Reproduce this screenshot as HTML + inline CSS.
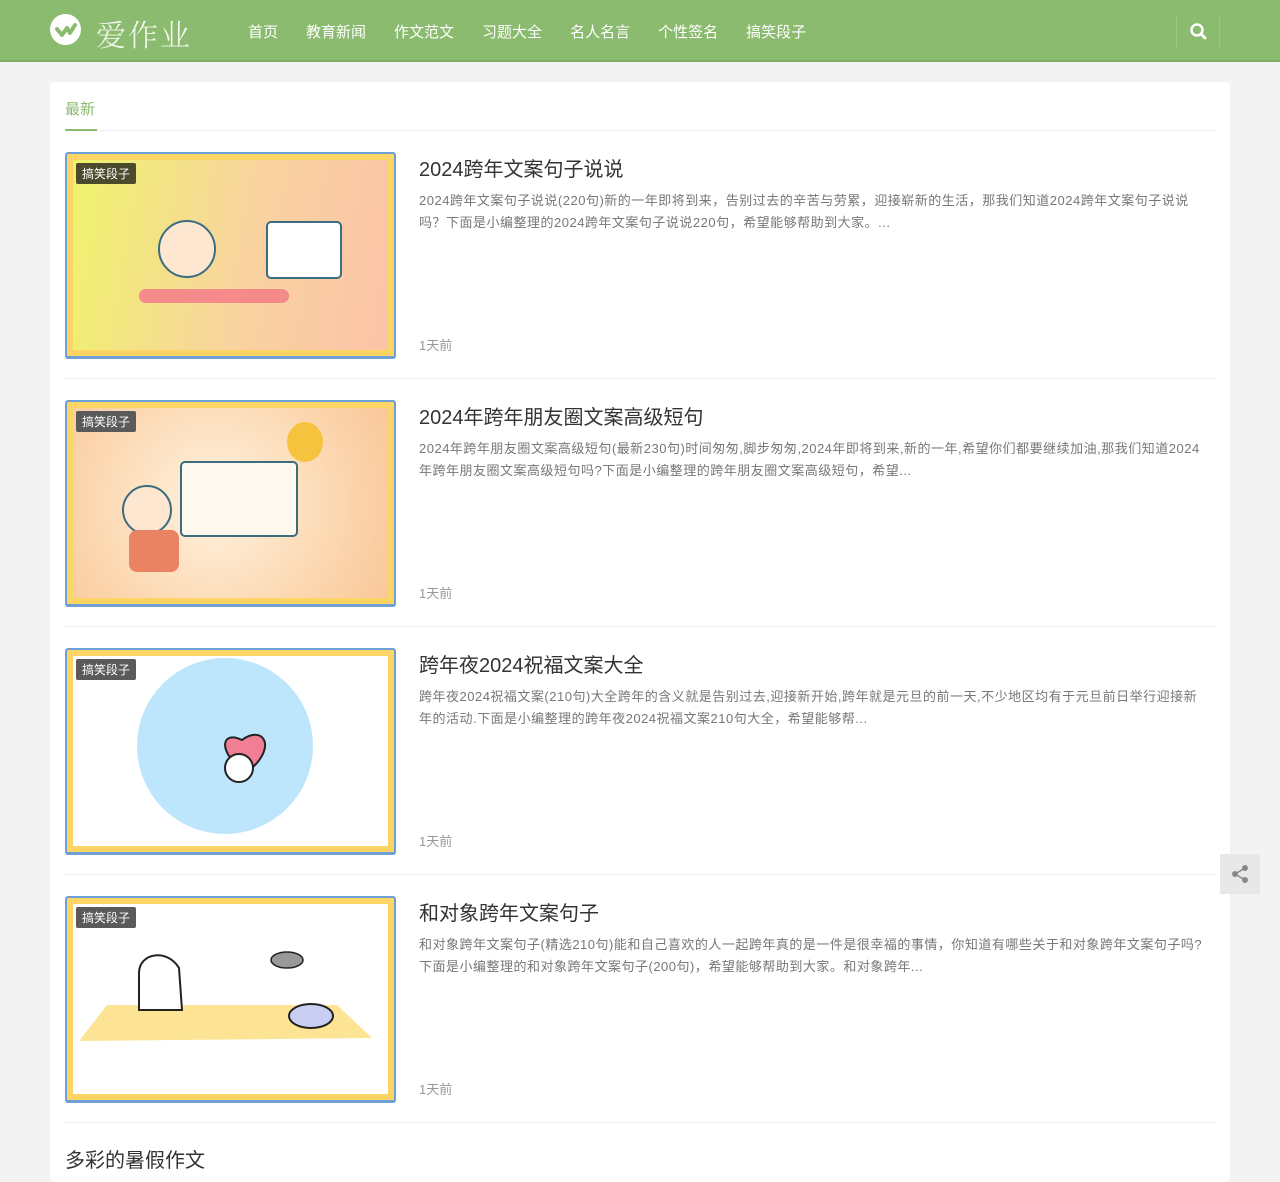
<!DOCTYPE html>
<html><head><meta charset="utf-8"><style>
*{margin:0;padding:0;box-sizing:border-box}
body{width:1280px;height:1167px;overflow:hidden;background:#f3f3f3;font-family:"Liberation Sans","Noto Sans CJK SC",sans-serif;position:relative}
.hd{height:62px;background:#8bbb6f;border-bottom:2px solid #7fae63;position:relative}
.logo{position:absolute;left:50px;top:14px;width:31px;height:31px;border-radius:50%;background:#fff}
.lt{position:absolute;left:96px;top:11px;font-size:30px;color:#f4f8ef;letter-spacing:2px;font-family:"Noto Serif CJK SC",serif;font-weight:300}
.nav{position:absolute;left:248px;top:21px;font-size:15px;color:#fff;white-space:nowrap}
.nav span{margin-right:28px}
.srch{position:absolute;left:1176px;top:16px;width:44px;height:32px;border-left:1px solid #9cc784;border-right:1px solid #9cc784}
.card{position:absolute;left:50px;top:82px;width:1180px;height:1100px;background:#fff;border-radius:4px}
.tab{position:absolute;left:15px;top:16px;font-size:15px;color:#8bbb6f}
.tabl{position:absolute;left:15px;top:48px;width:1150px;border-top:1px solid #eee}
.tabu{position:absolute;left:15px;top:47px;width:32px;height:2px;background:#8bbb6f}
.row{position:absolute;left:15px;width:1151px;height:227px;border-bottom:1px solid #eee}
.th{position:absolute;left:0;top:0;width:331px;height:207px;border:2px solid #6d9fd9;border-bottom-width:3px;border-radius:3px;overflow:hidden}
.in{position:absolute;inset:0;border:6px solid #fcd565}
.tag{position:absolute;left:9px;top:9px;background:#5a5a5a;color:#fff;font-size:12px;padding:2px 6px;border-radius:2px}
.t{position:absolute;left:354px;top:1px;font-size:20px;color:#333}
.d{position:absolute;left:354px;top:38px;width:790px;font-size:13px;line-height:22px;color:#777;letter-spacing:0.5px}
.dt{position:absolute;left:354px;top:183px;font-size:13px;color:#999}
.bt{position:absolute;left:15px;top:1062px;font-size:20px;color:#333}
.share{position:absolute;left:1220px;top:854px;width:40px;height:40px;background:#e8e8e8}
</style></head><body>
<div class="hd">
<div class="logo"><svg width="31" height="31" viewBox="0 0 31 31"><path d="M7 15 L12 21 L17 14 L20 19 L25 11" stroke="#8bbb6f" stroke-width="4" fill="none" stroke-linecap="round" stroke-linejoin="round"/></svg></div>
<div class="lt">爱作业</div>
<div class="nav"><span>首页</span><span>教育新闻</span><span>作文范文</span><span>习题大全</span><span>名人名言</span><span>个性签名</span><span>搞笑段子</span></div>
<div class="srch"><svg width="44" height="32"><circle cx="20" cy="14" r="5.5" stroke="#fff" stroke-width="2.5" fill="none"/><line x1="24" y1="18" x2="28" y2="22" stroke="#fff" stroke-width="3" stroke-linecap="round"/></svg></div>
</div>
<div class="card">
<div class="tab">最新</div><div class="tabl"></div><div class="tabu"></div>
<div class="row" style="top:70px"><div class="th" style="background:linear-gradient(100deg,#eef46a,#f9d3a0 55%,#fcc2a8)"><div class="in"></div>
<svg style="position:absolute;left:0;top:0" width="327" height="202"><circle cx="120" cy="95" r="28" fill="#fde7d0" stroke="#3b6d80" stroke-width="2"/><rect x="72" y="135" width="150" height="14" rx="7" fill="#f58a8a"/><rect x="200" y="68" width="74" height="56" rx="4" fill="#fff" stroke="#3b6d80" stroke-width="2"/></svg>
<div class="tag" style="background:#4c4a2c">搞笑段子</div></div>
<div class="t">2024跨年文案句子说说</div>
<div class="d">2024跨年文案句子说说(220句)新的一年即将到来，告别过去的辛苦与劳累，迎接崭新的生活，那我们知道2024跨年文案句子说说吗？下面是小编整理的2024跨年文案句子说说220句，希望能够帮助到大家。...</div>
<div class="dt">1天前</div></div>
<div class="row" style="top:318px"><div class="th" style="background:radial-gradient(circle at 45% 50%,#fff3e0,#fcd7b0 60%,#f9c697)"><div class="in"></div>
<svg style="position:absolute;left:0;top:0" width="327" height="202"><rect x="114" y="60" width="116" height="74" rx="4" fill="#fff8ee" stroke="#3b6d80" stroke-width="2"/><circle cx="80" cy="108" r="24" fill="#fde7d0" stroke="#3b6d80" stroke-width="2"/><rect x="62" y="128" width="50" height="42" rx="8" fill="#e98363"/><ellipse cx="238" cy="40" rx="18" ry="20" fill="#f6c33f"/></svg>
<div class="tag">搞笑段子</div></div>
<div class="t">2024年跨年朋友圈文案高级短句</div>
<div class="d">2024年跨年朋友圈文案高级短句(最新230句)时间匆匆,脚步匆匆,2024年即将到来,新的一年,希望你们都要继续加油,那我们知道2024年跨年朋友圈文案高级短句吗?下面是小编整理的跨年朋友圈文案高级短句，希望...</div>
<div class="dt">1天前</div></div>
<div class="row" style="top:566px"><div class="th" style="background:#fff"><div class="in"></div>
<svg style="position:absolute;left:0;top:0" width="327" height="202"><circle cx="158" cy="96" r="88" fill="#bde5fb"/><path d="M175 120 C150 100 155 80 175 90 C195 75 210 95 185 118 Z" fill="#f07f95" stroke="#222" stroke-width="2"/><circle cx="172" cy="118" r="14" fill="#fff" stroke="#222" stroke-width="2"/></svg>
<div class="tag">搞笑段子</div></div>
<div class="t">跨年夜2024祝福文案大全</div>
<div class="d">跨年夜2024祝福文案(210句)大全跨年的含义就是告别过去,迎接新开始,跨年就是元旦的前一天,不少地区均有于元旦前日举行迎接新年的活动.下面是小编整理的跨年夜2024祝福文案210句大全，希望能够帮...</div>
<div class="dt">1天前</div></div>
<div class="row" style="top:814px"><div class="th" style="background:#fff"><div class="in"></div>
<svg style="position:absolute;left:0;top:0" width="327" height="202"><polygon points="40,107 270,107 305,140 12,143" fill="#fde494"/><path d="M72 112 L72 75 C72 55 100 50 112 70 L115 112 Z" fill="#fff" stroke="#222" stroke-width="2"/><ellipse cx="244" cy="118" rx="22" ry="12" fill="#c9cff2" stroke="#222" stroke-width="2"/><ellipse cx="220" cy="62" rx="16" ry="8" fill="#999" stroke="#222" stroke-width="1.5"/></svg>
<div class="tag">搞笑段子</div></div>
<div class="t">和对象跨年文案句子</div>
<div class="d">和对象跨年文案句子(精选210句)能和自己喜欢的人一起跨年真的是一件是很幸福的事情，你知道有哪些关于和对象跨年文案句子吗?下面是小编整理的和对象跨年文案句子(200句)，希望能够帮助到大家。和对象跨年...</div>
<div class="dt">1天前</div></div>
<div class="bt">多彩的暑假作文</div>
</div>
<div class="share"><svg width="40" height="40"><g stroke="#888" stroke-width="1.5" fill="#888"><line x1="15" y1="20" x2="25" y2="14"/><line x1="15" y1="20" x2="25" y2="26"/><circle cx="15" cy="20" r="2.2"/><circle cx="25" cy="14" r="2.2"/><circle cx="25" cy="26" r="2.2"/></g></svg></div>
</body></html>
